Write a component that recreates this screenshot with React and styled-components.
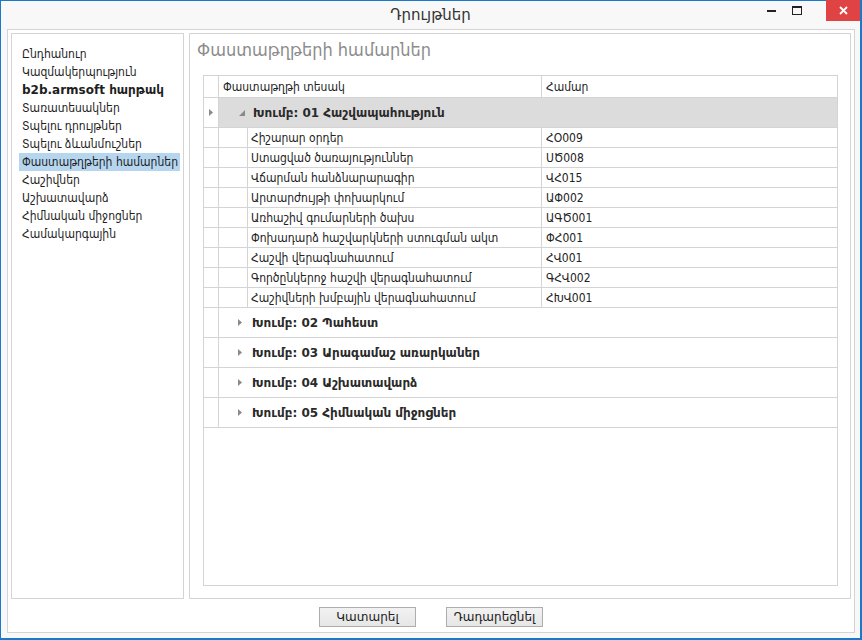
import React from "react";
import styled, { createGlobalStyle } from "styled-components";

const Global = createGlobalStyle`
  html, body { margin: 0; padding: 0; }
  body { font-family: "DejaVu Sans", "Noto Sans", sans-serif; font-size: 12px; color: #222; }
  * { box-sizing: border-box; }
`;

const condensed = `
  font-family: "DejaVu Sans Condensed", "DejaVu Sans", sans-serif;
  font-stretch: condensed;
`;

const Window = styled.div`
  width: 862px;
  height: 640px;
  background: #f8f8f8;
  border-style: solid;
  border-color: #1b79c9;
  border-width: 1px 2px 2px 1px;
  display: flex;
  flex-direction: column;
`;

const TitleBar = styled.div`
  height: 28px;
  position: relative;
  display: flex;
  align-items: center;
  justify-content: center;
  font-size: 15px;
  color: #333;
`;

const Controls = styled.div`
  position: absolute;
  right: 0;
  top: -1px;
  display: flex;
  align-items: flex-start;
  height: 21px;
`;

const CtrlBtn = styled.div`
  width: ${(p) => p.$w || 26}px;
  height: 21px;
  display: flex;
  align-items: center;
  justify-content: center;
  background: ${(p) => (p.$close ? "#e04343" : "transparent")};
`;

const Frame = styled.div`
  flex: 1;
  margin: 0 5px 5px 6px;
  background: #fff;
  border: 1px solid #d4d4d4;
  padding: 3px 3px 0 3px;
  display: flex;
  flex-direction: column;
`;

const Panels = styled.div`
  display: flex;
  gap: 5px;
  height: 566px;
`;

const LeftPanel = styled.div`
  width: 173px;
  border: 1px solid #d4d4d4;
  padding-top: 11px;
  display: flex;
  flex-direction: column;
`;

const MenuItem = styled.div`
  height: 18px;
  line-height: 18px;
  margin: 0 3px 0 7px;
  padding-left: 3px;
  white-space: nowrap;
  ${(p) =>
    p.$bold
      ? `font-weight: bold; font-family: "DejaVu Sans", sans-serif;`
      : condensed}
  background: ${(p) => (p.$selected ? "#b6d6f0" : "transparent")};
  color: #1e1e1e;
`;

const RightPanel = styled.div`
  flex: 1;
  border: 1px solid #d4d4d4;
  display: flex;
  flex-direction: column;
`;

const PanelTitle = styled.div`
  height: 34px;
  line-height: 32px;
  padding: 0 7px;
  font-size: 18px;
  color: #8c8c8c;
  ${condensed}
`;

const Grid = styled.div`
  flex: 1;
  margin: 7px 12px 12px 13px;
  border: 1px solid #d4d4d4;
  display: flex;
  flex-direction: column;
`;

const Row = styled.div`
  display: flex;
  height: ${(p) => p.$h}px;
`;

const Indicator = styled.div`
  width: 15px;
  flex: none;
  border-right: 1px solid #d4d4d4;
  border-bottom: 1px solid #d4d4d4;
  display: flex;
  align-items: center;
  justify-content: center;
`;

const Cell = styled.div`
  width: ${(p) => (p.$w ? p.$w + "px" : "auto")};
  flex: ${(p) => (p.$w ? "none" : "1")};
  border-bottom: 1px solid #d4d4d4;
  border-right: ${(p) => (p.$last ? "none" : "1px solid #d4d4d4")};
  padding-left: ${(p) => p.$pl ?? 4}px;
  display: flex;
  align-items: center;
  white-space: nowrap;
  overflow: hidden;
  color: #222;
  ${condensed}
`;

const GroupCell = styled.div`
  flex: 1;
  background: ${(p) => (p.$open ? "#dcdcdc" : "#fff")};
  border-bottom: 1px solid #d4d4d4;
  display: flex;
  align-items: center;
  padding-left: ${(p) => (p.$open ? 20 : 19)}px;
  font-weight: bold;
  color: #2a2a2a;
  gap: ${(p) => (p.$open ? 8 : 10)}px;
`;

const Filler = styled.div`
  flex: 1;
  display: flex;
`;

const FillerIndicator = styled.div`
  width: 15px;
  border-right: 1px solid #d4d4d4;
  height: 0;
`;

const ButtonBar = styled.div`
  display: flex;
  justify-content: center;
  gap: 30px;
  padding-top: 8px;
`;

const Button = styled.button`
  width: 97px;
  height: 20px;
  border: 1px solid #adadad;
  background: linear-gradient(#f2f2f2, #e6e6e6);
  font-family: "DejaVu Sans", sans-serif;
  font-size: 12px;
  color: #222;
  padding: 0;
`;

const Tri = ({ open, color = "#8a8a8a" }) =>
  open ? (
    <svg width="6" height="6" viewBox="0 0 6 6">
      <polygon points="6,0 6,6 0,6" fill={color} />
    </svg>
  ) : (
    <svg width="4" height="7" viewBox="0 0 4 7">
      <polygon points="0,0 4,3.5 0,7" fill={color} />
    </svg>
  );

const menu = [
  "Ընդհանուր",
  "Կազմակերպություն",
  "b2b.armsoft հարթակ",
  "Տառատեսակներ",
  "Տպելու դրույթներ",
  "Տպելու ձևանմուշներ",
  "Փաստաթղթերի համարներ",
  "Հաշիվներ",
  "Աշխատավարձ",
  "Հիմնական միջոցներ",
  "Համակարգային",
];

const docs = [
  ["Հիշարար օրդեր", "ՀՕ009"],
  ["Ստացված ծառայություններ", "ՍԾ008"],
  ["Վճարման հանձնարարագիր", "ՎՀ015"],
  ["Արտարժույթի փոխարկում", "ԱՓ002"],
  ["Առհաշիվ գումարների ծախս", "ԱԳԾ001"],
  ["Փոխադարձ հաշվարկների ստուգման ակտ", "ՓՀ001"],
  ["Հաշվի վերագնահատում", "ՀՎ001"],
  ["Գործընկերոջ հաշվի վերագնահատում", "ԳՀՎ002"],
  ["Հաշիվների խմբային վերագնահատում", "ՀԽՎ001"],
];

const groups = [
  "Խումբ: 02 Պահեստ",
  "Խումբ: 03 Արագամաշ առարկաներ",
  "Խումբ: 04 Աշխատավարձ",
  "Խումբ: 05 Հիմնական միջոցներ",
];

export default function App() {
  return (
    <>
      <Global />
      <Window>
        <TitleBar>
          Դրույթներ
          <Controls>
            <CtrlBtn $w={26}>
              <svg width="9" height="2"><rect width="9" height="2" fill="#222" /></svg>
            </CtrlBtn>
            <CtrlBtn $w={26}>
              <svg width="10" height="9" viewBox="0 0 10 9">
                <rect x="0.5" y="0.5" width="9" height="8" fill="none" stroke="#222" />
                <rect x="0" y="0" width="10" height="2" fill="#222" />
              </svg>
            </CtrlBtn>
            <CtrlBtn $w={16} />
            <CtrlBtn $close $w={34}>
              <svg width="9" height="9" viewBox="0 0 9 9">
                <path d="M1 1 L8 8 M8 1 L1 8" stroke="#fff" strokeWidth="1.8" />
              </svg>
            </CtrlBtn>
          </Controls>
        </TitleBar>
        <Frame>
          <Panels>
            <LeftPanel>
              {menu.map((m, i) => (
                <MenuItem key={m} $bold={i === 2} $selected={i === 6}>
                  {m}
                </MenuItem>
              ))}
            </LeftPanel>
            <RightPanel>
              <PanelTitle>Փաստաթղթերի համարներ</PanelTitle>
              <Grid>
                <Row $h={22}>
                  <Indicator />
                  <Cell $w={323}>Փաստաթղթի տեսակ</Cell>
                  <Cell $last>Համար</Cell>
                </Row>
                <Row $h={30}>
                  <Indicator>
                    <Tri />
                  </Indicator>
                  <GroupCell $open>
                    <Tri open />
                    Խումբ: 01 Հաշվապահություն
                  </GroupCell>
                </Row>
                {docs.map(([n, c]) => (
                  <Row $h={20} key={n}>
                    <Indicator />
                    <Cell $w={29} />
                    <Cell $w={294} $pl={3}>
                      {n}
                    </Cell>
                    <Cell $last>{c}</Cell>
                  </Row>
                ))}
                {groups.map((g) => (
                  <Row $h={30} key={g}>
                    <Indicator />
                    <GroupCell>
                      <Tri />
                      {g}
                    </GroupCell>
                  </Row>
                ))}
                <Filler>
                  <FillerIndicator />
                </Filler>
              </Grid>
            </RightPanel>
          </Panels>
          <ButtonBar>
            <Button>Կատարել</Button>
            <Button>Դադարեցնել</Button>
          </ButtonBar>
        </Frame>
      </Window>
    </>
  );
}
